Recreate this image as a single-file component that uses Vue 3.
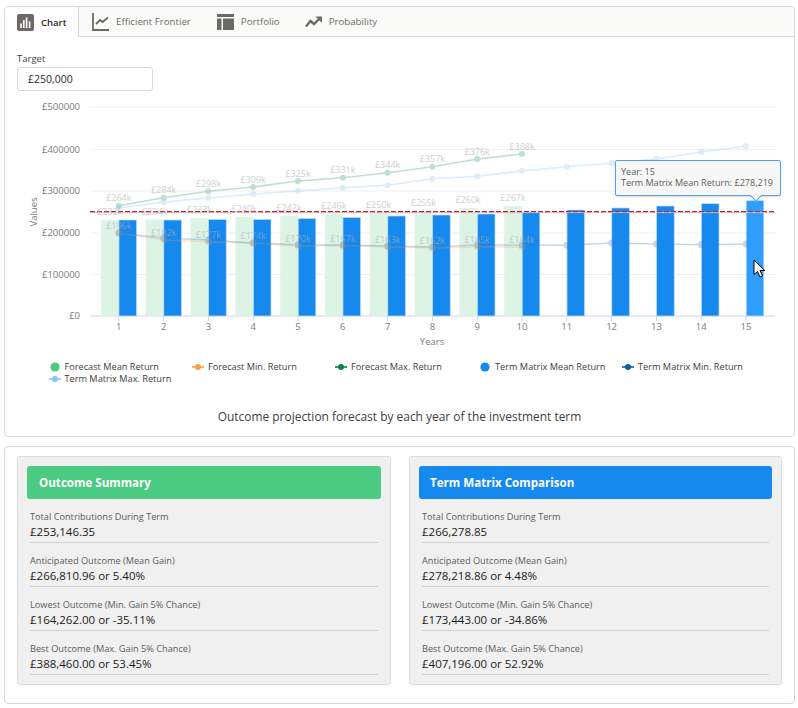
<script setup>
const xs = Array.from({ length: 15 }, (_, i) => 118.8 + 44.8 * i)
const baseY = 316
const gridYs = [
  { y: 107, t: '£500000' }, { y: 149.5, t: '£400000' }, { y: 191, t: '£300000' },
  { y: 233, t: '£200000' }, { y: 274.5, t: '£100000' }, { y: 316, t: '£0' }
]
const pts = (a) => a.map((y, i) => `${xs[i]},${y}`).join(' ')
const fcBars = [220, 219.5, 218, 217, 216, 214, 212.5, 210.5, 208, 206]
const fcBarLabels = ['232k', '234k', '237k', '240k', '242k', '246k', '250k', '255k', '260k', '267k']
const tmBars = [220, 220, 219.5, 219.5, 218.5, 217.5, 216, 215, 214, 212, 210, 208, 206, 203.7, 200.7]
const fcMean = [205.7, 197.7, 191.3, 187, 181, 177.7, 172.7, 166.7, 159, 154]
const fcMeanLabels = ['264k', '284k', '298k', '309k', '325k', '331k', '344k', '357k', '376k', '388k']
const fcMin = [233, 240, 242, 243, 246, 245.5, 247, 248, 247, 247]
const fcMinLabels = ['196k', '182k', '177k', '174k', '170k', '167k', '163k', '162k', '165k', '164k']
const tmMax = [208, 202, 198, 194, 191, 187.7, 185.3, 178.7, 176.3, 171, 166.7, 163.3, 159, 152, 146.3]
const tmMin = [233, 238, 240, 243, 244.7, 245, 246, 247, 245, 245, 245.3, 243, 244, 244.7, 244]
const legend = [
  { t: 'Forecast Mean Return', c: '#4bca81', k: 'dot' },
  { t: 'Forecast Min. Return', c: '#ff9e4a', k: 'line' },
  { t: 'Forecast Max. Return', c: '#04844b', k: 'line' },
  { t: 'Term Matrix Mean Return', c: '#1589ee', k: 'dot' },
  { t: 'Term Matrix Min. Return', c: '#0b5cab', k: 'line' },
  { t: 'Term Matrix Max. Return', c: '#8ac4f8', k: 'line' }
]
const rowLabels = ['Total Contributions During Term', 'Anticipated Outcome (Mean Gain)', 'Lowest Outcome (Min. Gain 5% Chance)', 'Best Outcome (Max. Gain 5% Chance)']
const panels = [
  { title: 'Outcome Summary', tone: 'green', vals: ['£253,146.35', '£266,810.96 or 5.40%', '£164,262.00 or -35.11%', '£388,460.00 or 53.45%'] },
  { title: 'Term Matrix Comparison', tone: 'blue', vals: ['£266,278.85', '£278,218.86 or 4.48%', '£173,443.00 or -34.86%', '£407,196.00 or 52.92%'] }
]
</script>

<template>
  <div class="page">
    <section class="card">
      <nav class="tabs">
        <div class="tab active">
          <svg width="17" height="17" viewBox="0 0 17 17"><rect width="17" height="17" rx="2" fill="#6b6a66"/><path d="M4 14V9.5M6.8 14V6M9.6 14V3.5M12.6 14V7.5" stroke="#fff" stroke-width="1.6"/></svg>
          <span>Chart</span>
        </div>
        <div class="tab t2">
          <svg width="18" height="18" viewBox="0 0 18 18" fill="none"><path d="M1 0V17H17" stroke="#6b6a66" stroke-width="1.8"/><path d="M4 11L8 7L10.5 9L16 4.5" stroke="#6b6a66" stroke-width="1.8"/></svg>
          <span>Efficient Frontier</span>
        </div>
        <div class="tab t3">
          <svg width="17" height="16" viewBox="0 0 17 16"><rect width="17" height="3" fill="#6b6a66"/><rect y="4.5" width="4.5" height="11.5" fill="#6b6a66"/><rect x="6" y="4.5" width="11" height="11.5" fill="#6b6a66"/></svg>
          <span>Portfolio</span>
        </div>
        <div class="tab t4">
          <svg width="17" height="12" viewBox="0 0 17 12" fill="none"><path d="M1 10.5L5.5 5L9 8L15 2" stroke="#6b6a66" stroke-width="2.4"/><path d="M10.5 0.5H17V7Z" fill="#6b6a66"/></svg>
          <span>Probability</span>
        </div>
      </nav>

      <div class="target">
        <label class="target-label">Target</label>
        <div class="input">£250,000</div>
      </div>

      <div class="chart">
        <svg class="plot" width="789" height="256" viewBox="5 96 789 256">
          <g class="grid">
            <line v-for="g in gridYs.slice(0, 5)" :key="g.y" x1="90" x2="775" :y1="g.y" :y2="g.y" stroke="#eeeff1"/>
            <line x1="90" x2="775" y1="316" y2="316" stroke="#ccd6eb"/>
          </g>
          <text v-for="g in gridYs" :key="g.t" x="80" :y="g.y + 3" text-anchor="end" class="ax">{{ g.t }}</text>
          <text transform="translate(37 212) rotate(-90)" text-anchor="middle" class="ax">Values</text>
          <g v-for="(x, i) in xs" :key="i">
            <line :x1="x" :x2="x" y1="316" y2="321" stroke="#ccd6eb"/>
            <text :x="x" y="330" text-anchor="middle" class="ax">{{ i + 1 }}</text>
          </g>
          <text x="432" y="345" text-anchor="middle" class="ax">Years</text>

          <rect v-for="(y, i) in fcBars" :key="'f' + i" :x="xs[i] - 17.8" :y="y" width="18" :height="baseY - y" fill="#dcf3e6"/>
          <rect v-for="(y, i) in tmBars" :key="'t' + i" :x="xs[i] + 0.2" :y="y" width="17.6" :height="baseY - y" :fill="i === 14 ? '#2e9dfb' : '#1589ee'" stroke="#bcdcf8" stroke-width="0.7"/>

          <line x1="90" x2="775" y1="212.6" y2="212.6" stroke="#f3c9c9" stroke-width="1"/>
          <line x1="90" x2="775" y1="211.7" y2="211.7" stroke="#b02a37" stroke-width="1.2" stroke-dasharray="5 2"/>

          <g opacity="0.25">
            <polyline :points="pts(fcMean)" fill="none" stroke="#04844b" stroke-width="1.6"/>
            <circle v-for="(y, i) in fcMean" :key="'m' + i" :cx="xs[i]" :cy="y" r="3" fill="#04844b"/>
          </g>
          <g opacity="0.3">
            <polyline :points="pts(tmMax)" fill="none" stroke="#8ac4f8" stroke-width="1.6"/>
            <circle v-for="(y, i) in tmMax" :key="'x' + i" :cx="xs[i]" :cy="y" r="3" fill="#8ac4f8"/>
          </g>
          <g opacity="0.25">
            <polyline :points="pts(fcMin)" fill="none" stroke="#ff9e4a" stroke-width="1.6"/>
            <circle v-for="(y, i) in fcMin" :key="'n' + i" :cx="xs[i]" :cy="y" r="3.4" fill="#ff9e4a"/>
          </g>
          <g opacity="0.3">
            <polyline :points="pts(tmMin)" fill="none" stroke="#3f82c4" stroke-width="1.6"/>
            <circle v-for="(y, i) in tmMin" :key="'o' + i" :cx="xs[i]" :cy="y" r="3.4" fill="#3f82c4"/>
          </g>

          <text v-for="(t, i) in fcMeanLabels" :key="'ml' + i" :x="xs[i]" :y="fcMean[i] - 4.5" text-anchor="middle" class="dl">£{{ t }}</text>
          <text v-for="(t, i) in fcBarLabels" :key="'bl' + i" :x="xs[i] - 9" :y="fcBars[i] - 5" text-anchor="middle" class="dl">£{{ t }}</text>
          <text v-for="(t, i) in fcMinLabels" :key="'nl' + i" :x="xs[i]" :y="fcMin[i] - 4" text-anchor="middle" class="dl">£{{ t }}</text>
        </svg>

        <div class="tooltip">
          <div>Year: 15</div>
          <div>Term Matrix Mean Return: £278,219</div>
        </div>
        <svg class="cursor" width="13" height="20" viewBox="0 0 13 20"><path d="M1 1V15.5L4.5 12.5L7 18L9.5 17L7 11.5H11.8Z" fill="#fff" stroke="#000" stroke-width="1"/></svg>
      </div>

      <ul class="legend">
        <li v-for="l in legend" :key="l.t">
          <svg width="13" height="12" viewBox="0 0 13 12">
            <circle v-if="l.k === 'dot'" cx="6" cy="6" r="4.6" :fill="l.c"/>
            <g v-else><line x1="0" x2="12" y1="6" y2="6" :stroke="l.c" stroke-width="1.6"/><circle cx="6" cy="6" r="3" :fill="l.c"/></g>
          </svg>
          <span>{{ l.t }}</span>
        </li>
      </ul>

      <p class="caption">Outcome projection forecast by each year of the investment term</p>
    </section>

    <section class="card summary">
      <article v-for="p in panels" :key="p.title" class="panel">
        <h2 :class="p.tone">{{ p.title }}</h2>
        <div v-for="(v, i) in p.vals" :key="i" class="row">
          <div class="row-label">{{ rowLabels[i] }}</div>
          <div class="row-value">{{ v }}</div>
        </div>
      </article>
    </section>
  </div>
</template>

<style>
html, body { margin: 0; background: #fff; }
</style>

<style scoped>
.page {
  width: 791px;
  padding: 6px 3px 0 4px;
  display: flex;
  flex-direction: column;
  gap: 9px;
  font-family: "Open Sans", "Noto Sans", sans-serif;
  color: #3e3e3c;
}
.card {
  border: 1px solid #d8d8d6;
  border-radius: 4px;
  background: #fff;
  box-sizing: border-box;
}
.tabs {
  display: flex;
  height: 29px;
  background: #fafaf9;
  border-bottom: 1px solid #d8d8d6;
  border-radius: 4px 4px 0 0;
  font-size: 9.7px;
  color: #6b6a66;
}
.tab { display: flex; align-items: center; gap: 7px; }
.tab.active {
  width: 74px;
  box-sizing: border-box;
  padding-left: 12px;
  height: 30px;
  background: #fff;
  border-right: 1px solid #d8d8d6;
  color: #2b2826;
  font-weight: 600;
  font-size: 9.5px;
  border-radius: 4px 0 0 0;
}
.t2 { margin-left: 13px; gap: 6px; }
.t3 { margin-left: 26px; }
.t4 { margin-left: 25px; }
.target { padding: 15px 0 0 12px; }
.target-label { display: block; font-size: 9.5px; line-height: 13px; color: #3e3e3c; }
.input {
  margin-top: 2px;
  width: 136px;
  height: 24px;
  box-sizing: border-box;
  border: 1px solid #d8d8d6;
  border-radius: 3px;
  padding-left: 10px;
  font-size: 10.5px;
  line-height: 22px;
  color: #2b2826;
}
.chart { position: relative; margin-top: 5px; height: 256px; }
.plot { display: block; }
.ax { font-size: 9.5px; fill: #7a7a78; font-family: "Open Sans", sans-serif; }
.dl { font-size: 9px; fill: #b0b0ae; opacity: 0.6; font-family: "Open Sans", sans-serif; }
.tooltip {
  position: absolute;
  left: 610px;
  top: 64px;
  width: 166px;
  height: 36px;
  box-sizing: border-box;
  padding: 5px 0 0 5px;
  background: #f7f7f7;
  border: 1px solid #4da3f2;
  border-radius: 2px;
  font-size: 9.05px;
  line-height: 11px;
  color: #5c5c5a;
  white-space: nowrap;
  box-shadow: 0 1px 2px rgba(0, 0, 0, 0.15);
}
.tooltip::after {
  content: "";
  position: absolute;
  left: 136px;
  bottom: -5px;
  width: 7px;
  height: 7px;
  background: #f7f7f7;
  border-right: 1px solid #4da3f2;
  border-bottom: 1px solid #4da3f2;
  transform: rotate(45deg);
}
.cursor { position: absolute; left: 748px; top: 163px; }
.legend {
  list-style: none;
  margin: 9px 0 0 43.5px;
  padding: 0;
  display: grid;
  grid-template-columns: 143.5px 143px 144px 143px 142px;
  row-gap: 0;
  font-size: 9.2px;
  line-height: 12px;
  color: #3e3e3c;
}
.legend li { display: flex; align-items: center; gap: 3px; white-space: nowrap; }
.caption {
  margin: 23px 0 0;
  padding-bottom: 10px;
  text-align: center;
  font-size: 11.95px;
  line-height: 18px;
  color: #3e3e3c;
}
.summary {
  height: 258px;
  padding: 9px 12px 0 12px;
  display: grid;
  grid-template-columns: 374px 373px;
  column-gap: 18px;
  align-items: start;
}
.panel {
  height: 229px;
  box-sizing: border-box;
  padding: 9px 9px 0;
  background: #f0f0f0;
  border: 1px solid #dcdcdc;
  border-radius: 3px;
}
.panel h2 {
  margin: 0;
  height: 33px;
  padding-left: 12px;
  border-radius: 3px;
  font-size: 11.6px;
  font-weight: 700;
  line-height: 33px;
  color: #fff;
}
.panel h2.blue { padding-left: 11px; }
.green { background: #4bca81; }
.blue { background: #1589ee; }
.row {
  margin: 0 3px;
  height: 44px;
  box-sizing: border-box;
  border-bottom: 1px solid #d4d4d4;
  padding-top: 11px;
}
.row-label { font-size: 9.2px; line-height: 14px; color: #5c5c5a; }
.row-value { font-size: 11.5px; line-height: 15px; color: #1a1a18; }
</style>
